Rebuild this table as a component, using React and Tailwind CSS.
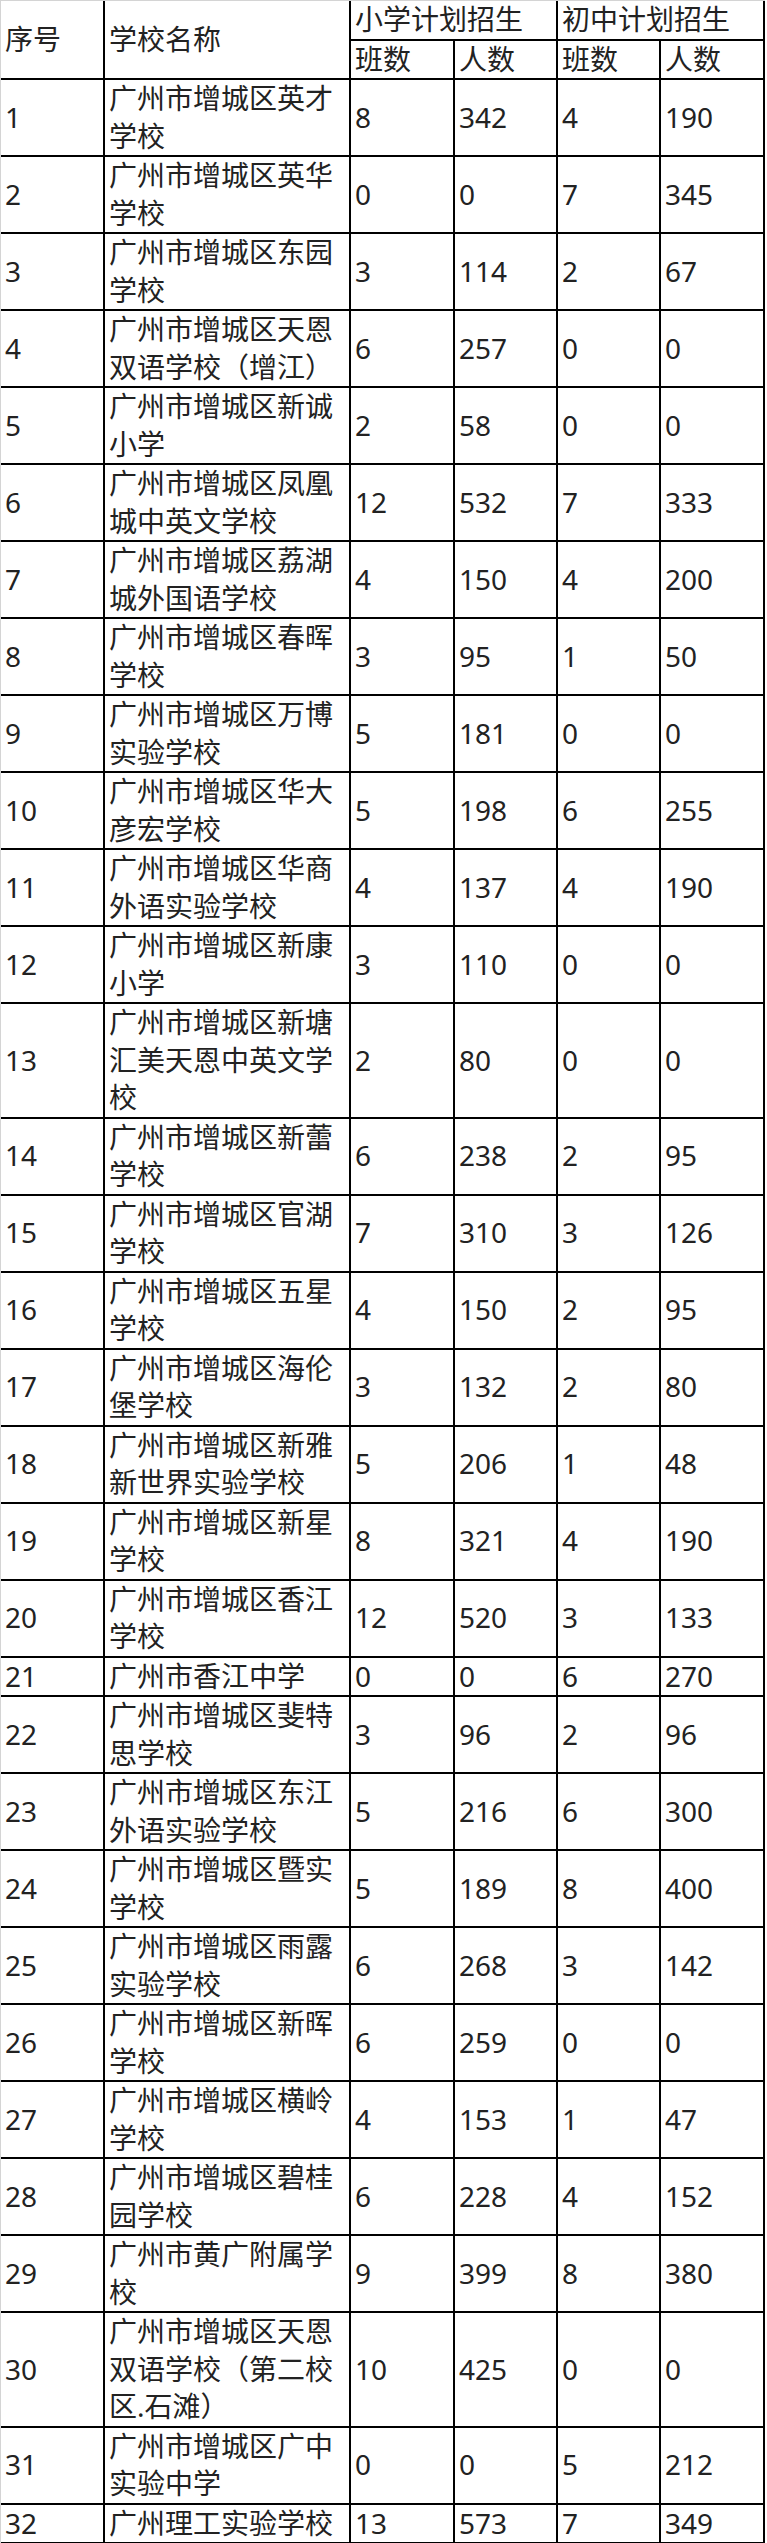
import React from "react";

const P = "广州市增城区";
const rows = [
  [1, P + "英才学校", 8, 342, 4, 190],
  [2, P + "英华学校", 0, 0, 7, 345],
  [3, P + "东园学校", 3, 114, 2, 67],
  [4, P + "天恩双语学校（增江）", 6, 257, 0, 0],
  [5, P + "新诚小学", 2, 58, 0, 0],
  [6, P + "凤凰城中英文学校", 12, 532, 7, 333],
  [7, P + "荔湖城外国语学校", 4, 150, 4, 200],
  [8, P + "春晖学校", 3, 95, 1, 50],
  [9, P + "万博实验学校", 5, 181, 0, 0],
  [10, P + "华大彦宏学校", 5, 198, 6, 255],
  [11, P + "华商外语实验学校", 4, 137, 4, 190],
  [12, P + "新康小学", 3, 110, 0, 0],
  [13, P + "新塘汇美天恩中英文学校", 2, 80, 0, 0],
  [14, P + "新蕾学校", 6, 238, 2, 95],
  [15, P + "官湖学校", 7, 310, 3, 126],
  [16, P + "五星学校", 4, 150, 2, 95],
  [17, P + "海伦堡学校", 3, 132, 2, 80],
  [18, P + "新雅新世界实验学校", 5, 206, 1, 48],
  [19, P + "新星学校", 8, 321, 4, 190],
  [20, P + "香江学校", 12, 520, 3, 133],
  [21, "广州市香江中学", 0, 0, 6, 270],
  [22, P + "斐特思学校", 3, 96, 2, 96],
  [23, P + "东江外语实验学校", 5, 216, 6, 300],
  [24, P + "暨实学校", 5, 189, 8, 400],
  [25, P + "雨露实验学校", 6, 268, 3, 142],
  [26, P + "新晖学校", 6, 259, 0, 0],
  [27, P + "横岭学校", 4, 153, 1, 47],
  [28, P + "碧桂园学校", 6, 228, 4, 152],
  [29, "广州市黄广附属学校", 9, 399, 8, 380],
  [30, P + "天恩双语学校（第二校区.石滩）", 10, 425, 0, 0],
  [31, P + "广中实验中学", 0, 0, 5, 212],
  [32, "广州理工实验学校", 13, 573, 7, 349],
];

const cell =
  "border-r-2 border-b-2 border-black pl-[4px] pr-0 py-0 text-left align-middle font-normal";

export default function App() {
  return (
    <div
      className="bg-white w-[767px] text-[28px] leading-[37.5px] text-[#222]"
      style={{ fontFamily: '"Noto Sans", "Noto Sans CJK SC", sans-serif' }}
    >
      <div className="border-l border-t border-[#d4d4d4] w-fit">
        <table className="table-fixed border-separate border-spacing-0 w-[764px]">
          <colgroup>
            <col className="w-[104px]" />
            <col className="w-[246px]" />
            <col className="w-[104px]" />
            <col className="w-[103px]" />
            <col className="w-[103px]" />
            <col className="w-[104px]" />
          </colgroup>
          <thead>
            <tr>
              <th rowSpan={2} className={cell}>序号</th>
              <th rowSpan={2} className={cell}>学校名称</th>
              <th colSpan={2} className={cell}>小学计划招生</th>
              <th colSpan={2} className={cell}>初中计划招生</th>
            </tr>
            <tr>
              <th className={cell}>班数</th>
              <th className={cell}>人数</th>
              <th className={cell}>班数</th>
              <th className={cell}>人数</th>
            </tr>
          </thead>
          <tbody>
            {rows.map((r) => (
              <tr key={r[0]}>
                <td className={cell}>{r[0]}</td>
                <td className={cell}>{r[1]}</td>
                <td className={cell}>{r[2]}</td>
                <td className={cell}>{r[3]}</td>
                <td className={cell}>{r[4]}</td>
                <td className={cell}>{r[5]}</td>
              </tr>
            ))}
          </tbody>
        </table>
      </div>
    </div>
  );
}
